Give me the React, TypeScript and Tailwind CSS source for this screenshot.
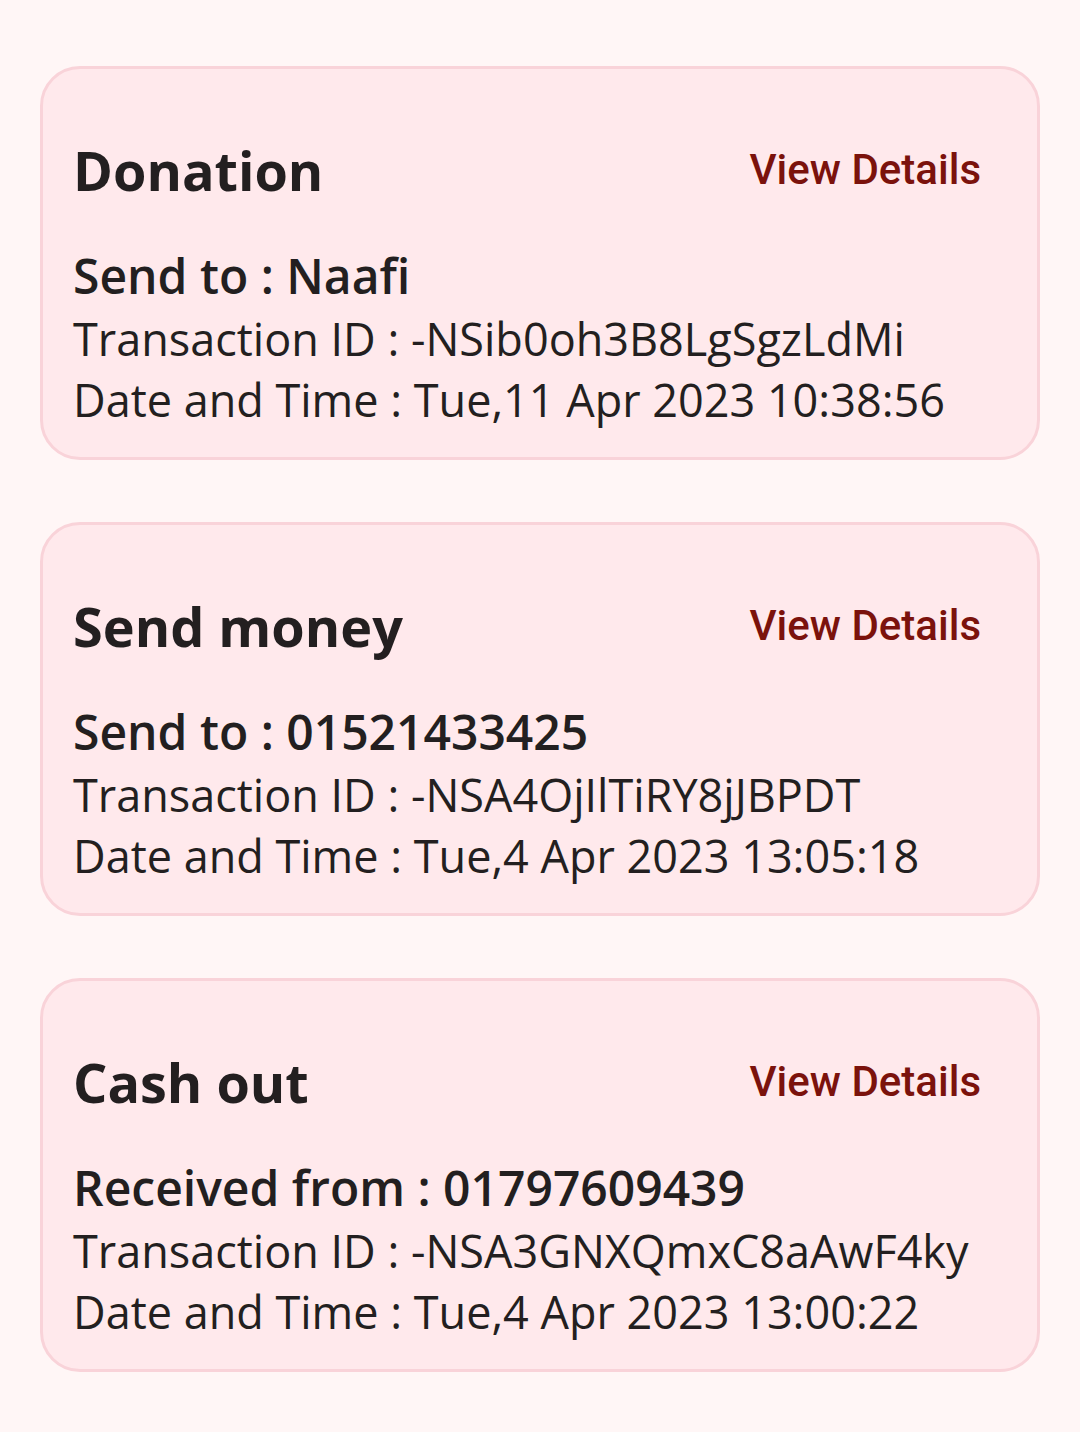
import React from 'react';

type Txn = {
  title: string;
  partyLabel: string;
  party: string;
  id: string;
  date: string;
};

const txns: Txn[] = [
  { title: 'Donation', partyLabel: 'Send to', party: 'Naafi', id: '-NSib0oh3B8LgSgzLdMi', date: 'Tue,11 Apr 2023 10:38:56' },
  { title: 'Send money', partyLabel: 'Send to', party: '01521433425', id: '-NSA4OjIlTiRY8jJBPDT', date: 'Tue,4 Apr 2023 13:05:18' },
  { title: 'Cash out', partyLabel: 'Received from', party: '01797609439', id: '-NSA3GNXQmxC8aAwF4ky', date: 'Tue,4 Apr 2023 13:00:22' },
];

function TxnCard({ txn }: { txn: Txn }) {
  return (
    <div className="rounded-[40px] border-[3px] border-[#f9d3d9] bg-[#ffe9ec] pl-[30px] pr-[56px] pt-[66px] pb-[27px]">
      <div className="flex items-center justify-between">
        <h2 className="text-[54px] font-bold leading-[70px] text-[#231f20]">{txn.title}</h2>
        <button type="button" className="font-['Roboto'] text-[42px] font-medium leading-[50px] text-[#7b120c]">
          View Details
        </button>
      </div>
      <p className="mt-[38px] text-[48px] font-semibold leading-[65px] text-[#231f20]">
        {txn.partyLabel} : {txn.party}
      </p>
      <p className="text-[45px] leading-[61px] text-[#231f20]">Transaction ID : {txn.id}</p>
      <p className="text-[45px] leading-[61px] text-[#231f20]">Date and Time : {txn.date}</p>
    </div>
  );
}

export default function App() {
  return (
    <div className="min-h-[1432px] bg-[#fff6f6] px-[40px] pt-[66px] font-['Open_Sans','Noto_Sans',sans-serif]">
      <div className="flex flex-col gap-[62px]">
        {txns.map((txn) => (
          <TxnCard key={txn.id} txn={txn} />
        ))}
      </div>
    </div>
  );
}
